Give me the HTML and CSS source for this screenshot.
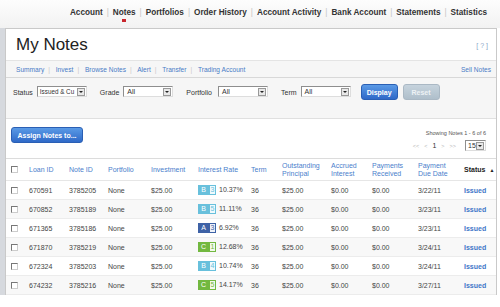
FILE: index.html
```html
<!DOCTYPE html>
<html lang="en">
<head>
  <meta charset="UTF-8">
  <title>My Notes</title>
  <link rel="stylesheet" href="styles.css">
</head>
<body>
  <div class="topnav">
    <a>Account</a><span class="sep">|</span>
    <a class="active">Notes</a><span class="sep">|</span>
    <a>Portfolios</a><span class="sep">|</span>
    <a>Order History</a><span class="sep">|</span>
    <a>Account Activity</a><span class="sep">|</span>
    <a>Bank Account</a><span class="sep">|</span>
    <a>Statements</a><span class="sep">|</span>
    <a>Statistics</a>
  </div>

  <div class="panel">
    <div class="title-row">
      <h1>My Notes</h1>
      <span class="help">[ ? ]</span>
    </div>

    <div class="subnav">
      <div class="links">
        <a>Summary</a><span class="sep">|</span>
        <a>Invest</a><span class="sep">|</span>
        <a>Browse Notes</a><span class="sep">|</span>
        <a>Alert</a><span class="sep">|</span>
        <a>Transfer</a><span class="sep">|</span>
        <a>Trading Account</a>
      </div>
      <a>Sell Notes</a>
    </div>

    <div class="filters">
      <label>Status</label>
      <div class="select status-sel"><span>Issued &amp; Cu</span><i></i></div>
      <label>Grade</label>
      <div class="select"><span>All</span><i></i></div>
      <label class="wide">Portfolio</label>
      <div class="select"><span>All</span><i></i></div>
      <label>Term</label>
      <div class="select last"><span>All</span><i></i></div>
      <button class="btn blue">Display</button>
      <button class="btn grey">Reset</button>
    </div>

    <div class="toolbar">
      <button class="btn blue assign">Assign Notes to...</button>
      <div class="paging">
        <div class="showing">Showing Notes 1 - 6 of 6</div>
        <div class="pages">
          <span class="dim">&lt;&lt;</span>
          <span class="dim">&lt;</span>
          <span class="cur">1</span>
          <span class="dim">&gt;</span>
          <span class="dim">&gt;&gt;</span>
          <div class="select small"><span>15</span><i></i></div>
        </div>
      </div>
    </div>

    <table class="notes">
      <colgroup>
        <col style="width:18px"><col style="width:40px"><col style="width:39px"><col style="width:43px">
        <col style="width:47px"><col style="width:53px"><col style="width:31px"><col style="width:49px">
        <col style="width:41px"><col style="width:46px"><col style="width:46px"><col>
      </colgroup>
      <thead>
        <tr>
          <th><span class="cb"></span></th>
          <th>Loan ID</th>
          <th>Note ID</th>
          <th>Portfolio</th>
          <th>Investment</th>
          <th>Interest Rate</th>
          <th>Term</th>
          <th>Outstanding<br>Principal</th>
          <th>Accrued<br>Interest</th>
          <th>Payments<br>Received</th>
          <th>Payment<br>Due Date</th>
          <th class="sort">Status<span class="arrow">&#9650;</span></th>
        </tr>
      </thead>
      <tbody id="rows"></tbody>
    </table>
  </div>

  <script>
    const notes = [
      ['670591', '3785205', 'B', 3, '10.37%', '3/22/11'],
      ['670852', '3785189', 'B', 5, '11.11%', '3/23/11'],
      ['671365', '3785186', 'A', 3, '6.92%', '3/23/11'],
      ['671870', '3785219', 'C', 1, '12.68%', '3/24/11'],
      ['672324', '3785203', 'B', 4, '10.74%', '3/24/11'],
      ['674232', '3785216', 'C', 5, '14.17%', '3/27/11']
    ];

    const body = document.getElementById('rows');
    notes.forEach(n => {
      const tr = document.createElement('tr');
      tr.innerHTML = `
        <td><span class="cb"></span></td>
        <td>${n[0]}</td>
        <td>${n[1]}</td>
        <td>None</td>
        <td>$25.00</td>
        <td><span class="grade g${n[2]}"><b>${n[2]}</b><em>${n[3]}</em></span>${n[4]}</td>
        <td>36</td>
        <td>$25.00</td>
        <td>$0.00</td>
        <td>$0.00</td>
        <td>${n[5]}</td>
        <td class="status">Issued</td>
      `;
      body.appendChild(tr);
    });
  </script>
</body>
</html>
```

FILE: styles.css
```css
body {
  margin: 0;
  font-family: 'Liberation Sans', Arial, sans-serif;
  background: #fff;
  color: #333;
}
a {
  cursor: pointer;
}
.topnav {
  height: 28px;
  box-sizing: border-box;
  padding: 8px 13px 0 0;
  display: flex;
  justify-content: flex-end;
  align-items: flex-start;
  font-size: 8.2px;
  font-weight: bold;
  color: #333;
  background: linear-gradient(#fdfdfd, #f2f2f2);
}
.topnav .sep {
  color: #c4c4c4;
  font-weight: normal;
  margin: 0 4px;
}
.topnav .active {
  position: relative;
}
.topnav .active::after {
  content: '';
  position: absolute;
  left: 9px;
  top: 11px;
  width: 4px;
  height: 3px;
  background: #c8252c;
}
.panel {
  margin: 0 3px 0 5px;
  border: 1px solid #c9c9c9;
  border-bottom: none;
  box-shadow: -5px 0 0 #d6d9de;
  background: #fff;
}
.title-row {
  height: 31px;
  display: flex;
  justify-content: space-between;
  align-items: center;
  padding: 0 8px 0 10px;
}
.title-row h1 {
  margin: 0;
  font-size: 17px;
  font-weight: normal;
  color: #222;
}
.help {
  font-size: 7px;
  color: #8aa6c8;
  margin-top: 2px;
}
.subnav {
  height: 16px;
  display: flex;
  justify-content: space-between;
  align-items: center;
  padding: 0 5px 0 10px;
  font-size: 6.6px;
  color: #4a7cc6;
  background: #f6f6f6;
  border-top: 1px solid #e4e4e4;
  border-bottom: 1px solid #d8d8d8;
}
.subnav .sep {
  color: #c8c8c8;
  margin: 0 4px;
}
.filters {
  height: 41px;
  box-sizing: border-box;
  padding: 6px 0 0 7px;
  display: flex;
  align-items: flex-start;
  font-size: 7px;
  color: #333;
  background: #f6f6f6;
  border-bottom: 1px solid #e0e0e0;
}
.filters label {
  margin-top: 5px;
  margin-right: 4px;
}
.filters label.wide {
  margin-right: 6px;
}
.filters .select {
  margin-top: 2px;
  margin-right: 13px;
}
.filters .select.last {
  margin-right: 10px;
}
.select {
  width: 50px;
  height: 11px;
  box-sizing: border-box;
  border: 1px solid #8e8e8e;
  border-right-color: #ddd;
  border-bottom-color: #ddd;
  background: #fff;
  display: flex;
  align-items: center;
  justify-content: space-between;
  font-size: 7px;
  color: #333;
  padding-left: 3px;
  white-space: nowrap;
}
.select.status-sel {
  font-size: 6.3px;
  padding-left: 2px;
}
.select i {
  flex: none;
  width: 8px;
  height: 8px;
  margin-right: 1px;
  box-sizing: border-box;
  border: 1px solid #999;
  background: #e8e8e8;
  position: relative;
}
.select i::after {
  content: '';
  position: absolute;
  left: 1px;
  top: 2px;
  border-left: 2px solid transparent;
  border-right: 2px solid transparent;
  border-top: 2px solid #222;
}
.btn {
  font-family: inherit;
  font-size: 7px;
  font-weight: bold;
  color: #fff;
  border: none;
  border-radius: 3px;
  height: 16px;
  width: 37px;
  padding: 0;
}
.btn.blue {
  background: linear-gradient(#5a9ae6, #2f69c8);
  border: 1px solid #2a5fb4;
}
.btn.grey {
  background: linear-gradient(#c6d3dd, #afbfcb);
  border: 1px solid #aab8c4;
  color: #eef2f5;
  margin-left: 5px;
}
.toolbar {
  height: 39px;
  box-sizing: border-box;
  padding: 8px 10px 0 5px;
  display: flex;
  justify-content: space-between;
  align-items: flex-start;
}
.btn.assign {
  width: 72px;
  height: 16px;
}
.paging {
  text-align: right;
  font-size: 5.5px;
  color: #555;
}
.showing {
  margin-top: 3px;
}
.pages {
  display: flex;
  justify-content: flex-end;
  align-items: center;
  gap: 5px;
  margin-top: 4px;
}
.pages .dim {
  color: #b8b8b8;
}
.pages .cur {
  color: #333;
  font-size: 7px;
}
.select.small {
  width: 21px;
  margin-left: 4px;
  padding-left: 2px;
}
.notes {
  width: 100%;
  border-collapse: collapse;
  table-layout: fixed;
  font-size: 7px;
}
.notes th {
  height: 21px;
  text-align: left;
  font-weight: normal;
  color: #4a80cc;
  padding: 0 0 0 5px;
  line-height: 8px;
  border-top: 1px solid #dcdcdc;
  border-bottom: 1px solid #e6e6e6;
}
.notes th.sort {
  color: #222;
  font-weight: bold;
  white-space: nowrap;
}
.notes .arrow {
  font-size: 5px;
  margin-left: 4px;
}
.notes td {
  height: 18px;
  padding: 0 0 0 5px;
  color: #444;
  border-bottom: 1px solid #ececec;
  white-space: nowrap;
}
.notes tbody tr:nth-child(even) td {
  background: #f8f8f8;
}
.notes .status {
  color: #3f76c8;
  font-weight: bold;
}
.cb {
  display: inline-block;
  width: 5px;
  height: 5px;
  border: 1px solid #777;
  border-right-color: #ccc;
  border-bottom-color: #ccc;
  background: #fff;
  vertical-align: middle;
}
.grade {
  display: inline-flex;
  height: 10px;
  margin-right: 3px;
  vertical-align: middle;
  font-size: 7px;
}
.grade b {
  width: 11px;
  color: #fff;
  font-weight: normal;
  text-align: center;
  line-height: 10px;
}
.grade em {
  width: 5px;
  font-style: normal;
  text-align: center;
  line-height: 8px;
  border: 1px solid;
}
.gA b { background: #3e62a6; }
.gA em { color: #3e62a6; border-color: #3e62a6; background: #eef2f9; }
.gB b { background: #68c0dc; }
.gB em { color: #68c0dc; border-color: #68c0dc; background: #effafd; }
.gC b { background: #72b840; }
.gC em { color: #72b840; border-color: #72b840; background: #f2f9ec; }
```
